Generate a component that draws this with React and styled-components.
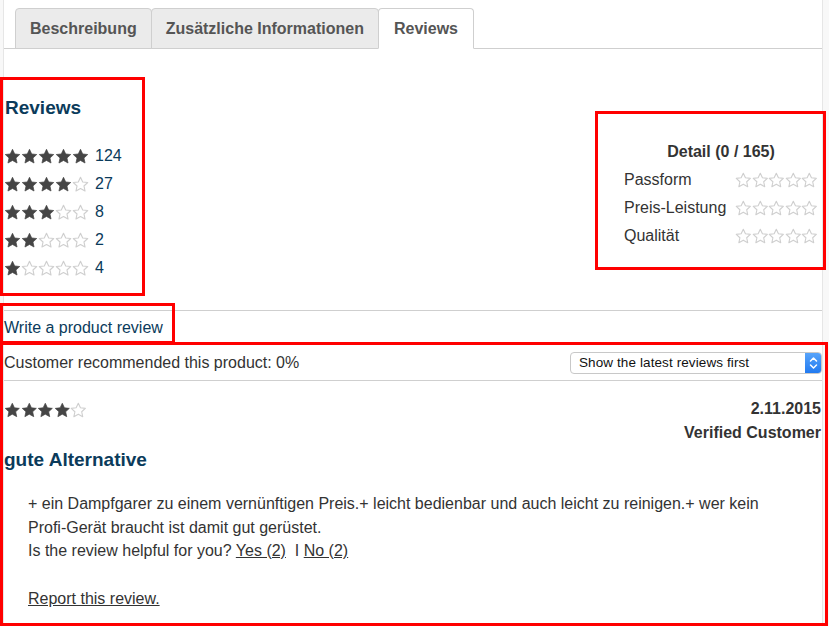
import React from "react";
import styled, { createGlobalStyle } from "styled-components";

const Global = createGlobalStyle`
  html, body { margin: 0; padding: 0; background: #fff; }
  body { font-family: "Liberation Sans", Arial, Helvetica, sans-serif; color: #333; }
  * { box-sizing: border-box; }
`;

const Page = styled.div`
  position: relative;
  display: flex;
  width: 829px;
  height: 626px;
  overflow: hidden;
`;

const Gutter = styled.div`
  flex: 0 0 ${(p) => p.$w}px;
  background: #f8f8f8;
  ${(p) => (p.$side === "left" ? "border-right: 1px solid #e6e6e6;" : "border-left: 1px solid #e6e6e6;")}
`;

const Main = styled.main`
  flex: 1;
  background: #fff;
  display: flex;
  flex-direction: column;
`;

const TabBar = styled.div`
  display: flex;
  align-items: flex-end;
  padding: 8px 0 0 11px;
  border-bottom: 1px solid #cfcfcf;
  height: 49px;
`;

const Tab = styled.div`
  height: 41px;
  margin-bottom: -1px;
  padding: 0 ${(p) => p.$pad}px;
  display: flex;
  align-items: center;
  font-size: 16px;
  font-weight: bold;
  color: #555;
  background: ${(p) => (p.$active ? "#fff" : "#ebebeb")};
  border: 1px solid #cfcfcf;
  border-bottom-color: ${(p) => (p.$active ? "#fff" : "#cfcfcf")};
  border-radius: 4px 4px 0 0;
  & + & { margin-left: -1px; }
`;

const Summary = styled.section`
  display: flex;
  justify-content: space-between;
  padding: 48px 4px 28px 0;
  border-bottom: 1px solid #cfcfcf;
`;

const Heading = styled.h2`
  margin: 0;
  font-size: 19px;
  line-height: 22px;
  font-weight: bold;
  color: #0b3b5b;
  padding-left: 1px;
`;

const HistList = styled.div`
  margin-top: 23px;
  display: flex;
  flex-direction: column;
`;

const HistRow = styled.div`
  display: flex;
  align-items: center;
  height: 28px;
  gap: 6px;
  font-size: 16px;
  color: #0b3b5b;
`;

const Detail = styled.div`
  margin-top: 45px;
  width: 194px;
  display: flex;
  flex-direction: column;
`;

const DetailTitle = styled.div`
  text-align: center;
  font-size: 16px;
  font-weight: bold;
  color: #333;
  line-height: 20px;
  height: 24px;
`;

const DetailRow = styled.div`
  display: flex;
  align-items: center;
  justify-content: space-between;
  height: 28px;
  font-size: 16px;
  color: #333;
`;

const WriteRow = styled.div`
  height: 33px;
  display: flex;
  align-items: center;
  font-size: 16px;
  color: #0b3b5b;
`;

const Toolbar = styled.div`
  height: 37px;
  display: flex;
  align-items: center;
  justify-content: space-between;
  border-top: 1px solid transparent;
  border-bottom: 1px solid #cfcfcf;
  font-size: 16px;
  color: #333;
`;

const Select = styled.div`
  width: 252px;
  height: 22px;
  border: 1px solid #c8c8c8;
  border-radius: 4px;
  display: flex;
  align-items: center;
  justify-content: space-between;
  font-size: 13.5px;
  color: #111;
  background: #fff;
  padding-left: 8px;
  overflow: hidden;
  letter-spacing: 0.1px;
`;

const SelectArrow = styled.div`
  width: 17px;
  height: 22px;
  margin-right: -1px;
  background: linear-gradient(#5aa6fb, #1f78f0);
  border-radius: 0 4px 4px 0;
  display: flex;
  align-items: center;
  justify-content: center;
`;

const Review = styled.article`
  display: flex;
  flex-direction: column;
  padding-top: 16px;
`;

const ReviewHead = styled.div`
  display: flex;
  justify-content: space-between;
  align-items: flex-start;
`;

const StarsWrap = styled.div`
  display: flex;
  padding-top: ${(p) => p.$top || 0}px;
`;

const Meta = styled.div`
  text-align: right;
  font-size: 16px;
  font-weight: bold;
  color: #333;
  line-height: 24px;
  padding-right: 1px;
`;

const ReviewTitle = styled.h3`
  margin: 4px 0 0;
  font-size: 19px;
  line-height: 22px;
  font-weight: bold;
  color: #0b3b5b;
`;

const Body = styled.div`
  margin-top: 21px;
  padding-left: 24px;
  font-size: 16px;
  line-height: 23.5px;
  color: #333;
`;

const Para = styled.p`
  margin: 0;
  margin-top: ${(p) => p.$mt || 0}px;
`;

const ULink = styled.span`
  text-decoration: underline;
  color: #333;
`;

const Annot = styled.div`
  position: absolute;
  border: 3px solid #ff0000;
  pointer-events: none;
`;

const STAR = "12,1.8 15.1,8.4 22.2,9.2 16.9,14.1 18.4,21.2 12,17.6 5.6,21.2 7.1,14.1 1.8,9.2 8.9,8.4";

function Star({ filled, size }) {
  return (
    <svg width={size} height={size} viewBox="0 0 24 24">
      <polygon
        points={STAR}
        fill={filled ? "#454545" : "#fff"}
        stroke={filled ? "#454545" : "#cfcfcf"}
        strokeWidth={filled ? 1 : 1.6}
        strokeLinejoin="round"
      />
    </svg>
  );
}

function Stars({ n, size = 17, top }) {
  return (
    <StarsWrap $top={top}>
      {[0, 1, 2, 3, 4].map((i) => (
        <Star key={i} filled={i < n} size={size} />
      ))}
    </StarsWrap>
  );
}

const hist = [
  [5, 124],
  [4, 27],
  [3, 8],
  [2, 2],
  [1, 4],
];

export default function App() {
  return (
    <>
      <Global />
      <Page>
        <Gutter $w={4} $side="left" />
        <Main>
          <TabBar>
            <Tab $pad={14}>Beschreibung</Tab>
            <Tab $pad={14}>Zusätzliche Informationen</Tab>
            <Tab $pad={15} $active>Reviews</Tab>
          </TabBar>
          <Summary>
            <div>
              <Heading>Reviews</Heading>
              <HistList>
                {hist.map(([s, c]) => (
                  <HistRow key={s}>
                    <Stars n={s} />
                    <span>{c}</span>
                  </HistRow>
                ))}
              </HistList>
            </div>
            <Detail>
              <DetailTitle>Detail (0 / 165)</DetailTitle>
              {["Passform", "Preis-Leistung", "Qualität"].map((l) => (
                <DetailRow key={l}>
                  <span>{l}</span>
                  <Stars n={0} size={16.6} />
                </DetailRow>
              ))}
            </Detail>
          </Summary>
          <WriteRow>Write a product review</WriteRow>
          <Toolbar>
            <span>Customer recommended this product: 0%</span>
            <Select>
              <span>Show the latest reviews first</span>
              <SelectArrow>
                <svg width="9" height="14" viewBox="0 0 9 14">
                  <path d="M1.5 5 L4.5 2 L7.5 5 M1.5 9 L4.5 12 L7.5 9" fill="none" stroke="#fff" strokeWidth="1.5" strokeLinecap="round" strokeLinejoin="round" />
                </svg>
              </SelectArrow>
            </Select>
          </Toolbar>
          <Review>
            <ReviewHead>
              <Stars n={4} size={16.6} top={5} />
              <Meta>
                <div>2.11.2015</div>
                <div>Verified Customer</div>
              </Meta>
            </ReviewHead>
            <ReviewTitle>gute Alternative</ReviewTitle>
            <Body>
              <Para>
                + ein Dampfgarer zu einem vernünftigen Preis.+ leicht bedienbar und auch leicht zu reinigen.+ wer kein
                <br />
                Profi-Gerät braucht ist damit gut gerüstet.
              </Para>
              <Para>
                Is the review helpful for you? <ULink>Yes (2)</ULink>&nbsp; I <ULink>No (2)</ULink>
              </Para>
              <Para $mt={24}>
                <ULink>Report this review.</ULink>
              </Para>
            </Body>
          </Review>
        </Main>
        <Gutter $w={7} $side="right" />
        <Annot style={{ left: 0, top: 77, width: 145, height: 219 }} />
        <Annot style={{ left: 595, top: 111, width: 231, height: 159 }} />
        <Annot style={{ left: 0, top: 303, width: 175, height: 41 }} />
        <Annot style={{ left: 0, top: 342, width: 828, height: 284 }} />
      </Page>
    </>
  );
}
